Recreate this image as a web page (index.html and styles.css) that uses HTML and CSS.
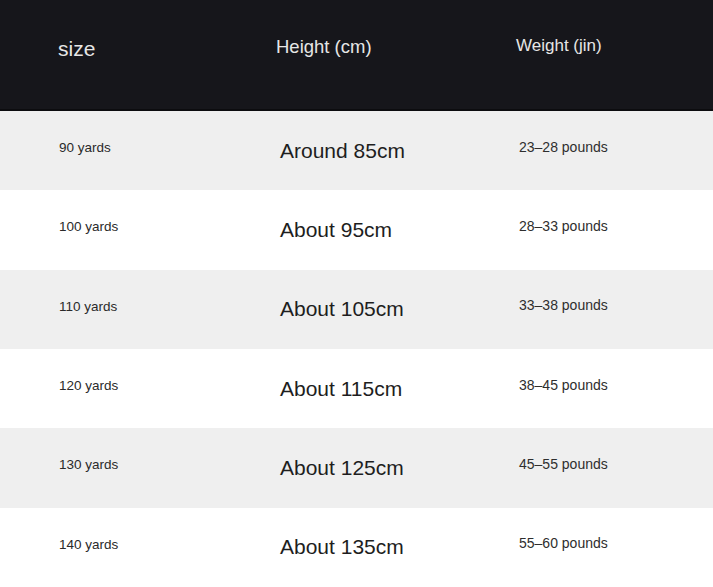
FILE: index.html
```html
<!DOCTYPE html>
<html lang="en">
<head>
<meta charset="utf-8">
<title>Size chart</title>
<link rel="stylesheet" href="styles.css">
</head>
<body>
<div class="chart">
  <div class="row head">
    <div class="cell c1"><span class="h-size">size</span></div>
    <div class="cell c2"><span class="h-height">Height (cm)</span></div>
    <div class="cell c3"><span class="h-weight">Weight (jin)</span></div>
  </div>
  <div class="row grey">
    <div class="cell c1">90 yards</div>
    <div class="cell c2">Around 85cm</div>
    <div class="cell c3">23–28 pounds</div>
  </div>
  <div class="row white">
    <div class="cell c1">100 yards</div>
    <div class="cell c2">About 95cm</div>
    <div class="cell c3">28–33 pounds</div>
  </div>
  <div class="row grey">
    <div class="cell c1">110 yards</div>
    <div class="cell c2">About 105cm</div>
    <div class="cell c3">33–38 pounds</div>
  </div>
  <div class="row white">
    <div class="cell c1">120 yards</div>
    <div class="cell c2">About 115cm</div>
    <div class="cell c3">38–45 pounds</div>
  </div>
  <div class="row grey">
    <div class="cell c1">130 yards</div>
    <div class="cell c2">About 125cm</div>
    <div class="cell c3">45–55 pounds</div>
  </div>
  <div class="row white">
    <div class="cell c1">140 yards</div>
    <div class="cell c2">About 135cm</div>
    <div class="cell c3">55–60 pounds</div>
  </div>
</div>
</body>
</html>
```
FILE: styles.css
```css
html, body {
  margin: 0;
  padding: 0;
  background: #ffffff;
}
body {
  font-family: "Liberation Sans", Arial, sans-serif;
  color: #222;
}
.chart {
  display: flex;
  flex-direction: column;
  height: 587px;
  width: 713px;
}
.row {
  display: grid;
  grid-template-columns: 220px 240px 1fr;
  flex: 1 1 0;
  align-items: center;
}
.row.head {
  flex: 0 0 111px;
  background: #16161b;
  border-bottom: 2px solid #0c0c0f;
  box-sizing: border-box;
  color: #e6e6e6;
}
.row.grey {
  background: #efefef;
}
.row.white {
  background: #ffffff;
}
.cell {
  padding-left: 59px;
  white-space: nowrap;
}
.c1 {
  font-size: 13.5px;
  padding-bottom: 6px;
  color: #2a2a2a;
}
.c2 {
  font-size: 21px;
  padding-left: 60px;
  padding-bottom: 0;
  color: #1e1e1e;
}
.c3 {
  font-size: 14px;
  padding-bottom: 8px;
  color: #2e2e2e;
}
.head .cell {
  padding-bottom: 0;
  color: #e6e6e6;
}
.h-size {
  font-size: 21px;
  display: block;
  padding-bottom: 12px;
  margin-left: -1px;
}
.h-height {
  font-size: 18.5px;
  display: block;
  padding-bottom: 16px;
  margin-left: -4px;
}
.h-weight {
  font-size: 17px;
  display: block;
  padding-bottom: 18px;
  margin-left: -3px;
}
```
